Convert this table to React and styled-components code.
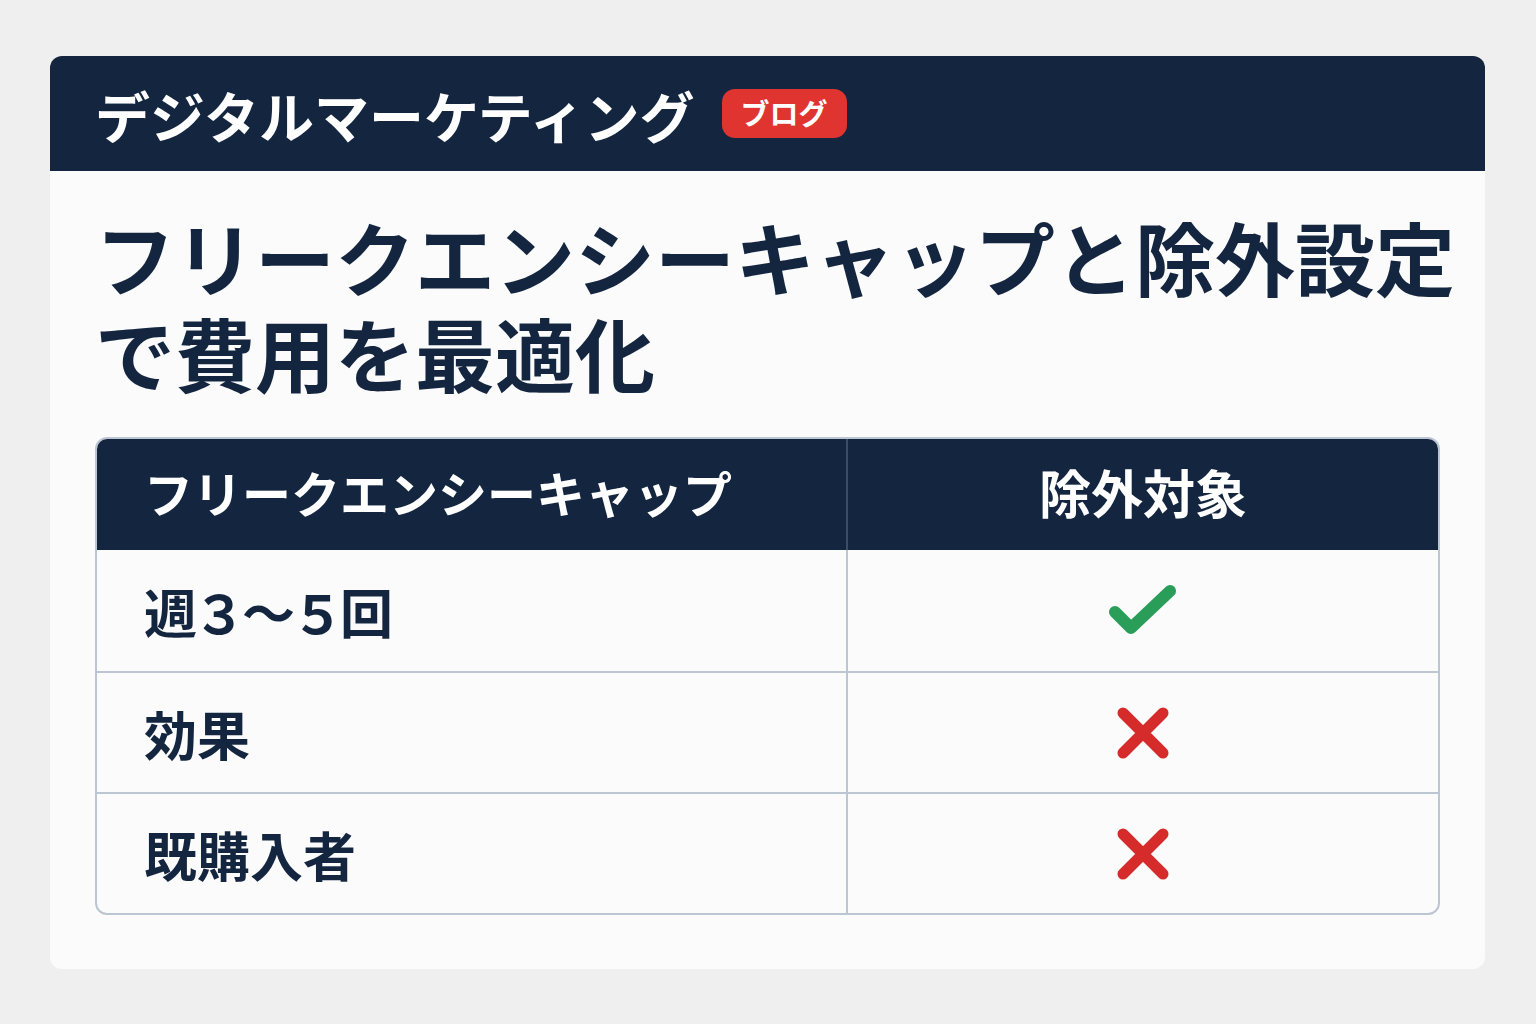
import React from "react";
import styled, { createGlobalStyle } from "styled-components";

const GlobalStyle = createGlobalStyle`
  html, body {
    margin: 0;
    padding: 0;
    background: #efefef;
    font-family: "Noto Sans CJK JP", "Noto Sans", sans-serif;
  }
`;

const Page = styled.div`
  padding: 56px 51px 56px 50px;
`;

const Card = styled.div`
  background: #fbfbfb;
  border-radius: 12px;
  overflow: hidden;
`;

const Header = styled.header`
  height: 115px;
  background: #13253f;
  display: flex;
  align-items: center;
  gap: 27px;
  padding-left: 45px;
`;

const Brand = styled.h2`
  margin: 0;
  color: #fff;
  font-size: 55px;
  font-weight: 700;
`;

const Badge = styled.span`
  background: #e03431;
  color: #fff;
  font-size: 29px;
  font-weight: 700;
  padding: 2px 19px 4px;
  border-radius: 13px;
  line-height: 43px;
`;

const Content = styled.div`
  padding: 36px 0 54px 45px;
`;

const Title = styled.h1`
  margin: 0 0 38px;
  color: #13253f;
  font-size: 80px;
  line-height: 96px;
  font-weight: 700;
`;

const Table = styled.div`
  margin-right: 45px;
  display: grid;
  grid-template-columns: 749px 1fr;
  grid-template-rows: 111px repeat(3, 121px);
  border: 2px solid #bcc5d2;
  border-radius: 12px;
  overflow: hidden;
`;

const HeadCell = styled.div`
  background: #13253f;
  color: #fff;
  font-size: ${(p) => (p.center ? "52px" : "49px")};
  font-weight: 700;
  display: flex;
  align-items: center;
  justify-content: ${(p) => (p.center ? "center" : "flex-start")};
  padding-left: ${(p) => (p.center ? "0" : "47px")};
  padding-bottom: 6px;
  border-left: ${(p) => (p.center ? "2px solid #3c4c66" : "none")};
`;

const Cell = styled.div`
  display: flex;
  align-items: center;
  justify-content: ${(p) => (p.center ? "center" : "flex-start")};
  padding-left: ${(p) => (p.center ? "0" : "47px")};
  color: #13253f;
  font-size: 53px;
  font-weight: 700;
  border-top: ${(p) => (p.first ? "none" : "2px solid #bcc5d2")};
  border-left: ${(p) => (p.center ? "2px solid #bcc5d2" : "none")};
`;

const Label = styled.span`
  letter-spacing: ${(p) => (p.tight ? "-4px" : "0")};
`;

const Check = () => (
  <svg width="70" height="56" viewBox="0 0 70 56">
    <path
      d="M7 29 L23 45 L62 8"
      fill="none"
      stroke="#2a9d58"
      strokeWidth="12"
      strokeLinecap="round"
      strokeLinejoin="round"
    />
  </svg>
);

const Cross = () => (
  <svg width="56" height="56" viewBox="0 0 56 56">
    <path
      d="M8 8 L48 48 M48 8 L8 48"
      fill="none"
      stroke="#d62b2b"
      strokeWidth="11"
      strokeLinecap="round"
    />
  </svg>
);

const rows = [
  { label: "週３～５回", ok: true, tight: true },
  { label: "効果", ok: false },
  { label: "既購入者", ok: false },
];

export default function App() {
  return (
    <>
      <GlobalStyle />
      <Page>
        <Card>
          <Header>
            <Brand>デジタルマーケティング</Brand>
            <Badge>ブログ</Badge>
          </Header>
          <Content>
            <Title>
              フリークエンシーキャップと除外設定
              <br />
              で費用を最適化
            </Title>
            <Table>
              <HeadCell>フリークエンシーキャップ</HeadCell>
              <HeadCell center>除外対象</HeadCell>
              {rows.map((r, i) => (
                <React.Fragment key={r.label}>
                  <Cell first={i === 0}>
                    <Label tight={r.tight}>{r.label}</Label>
                  </Cell>
                  <Cell first={i === 0} center>
                    {r.ok ? <Check /> : <Cross />}
                  </Cell>
                </React.Fragment>
              ))}
            </Table>
          </Content>
        </Card>
      </Page>
    </>
  );
}
